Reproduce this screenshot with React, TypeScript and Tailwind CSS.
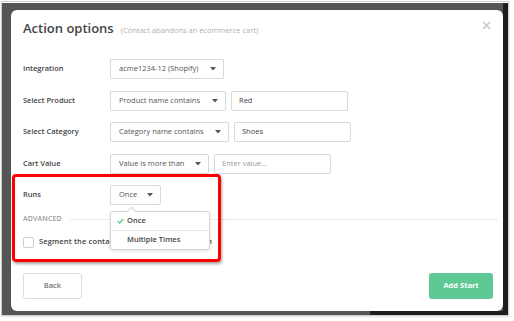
const Caret = () => (
  <svg width="6" height="4" viewBox="0 0 6 4" className="shrink-0">
    <path d="M0 0h6L3 3.5z" fill="#555" />
  </svg>
)

const Select = ({ label, width }: { label: string; width: string }) => (
  <div
    className={`${width} h-[20px] flex items-center justify-between pl-[8px] pr-[7px] border border-[#d9d9d9] rounded-[2px] bg-white text-[7.5px] text-[#555]`}
  >
    <span className="whitespace-nowrap">{label}</span>
    <Caret />
  </div>
)

const Input = ({ value, placeholder }: { value?: string; placeholder?: string }) => (
  <div className="w-[117px] h-[20px] flex items-center px-[7px] border border-[#d9d9d9] rounded-[2px] bg-white text-[7.5px]">
    {value ? (
      <span className="text-[#444]">{value}</span>
    ) : (
      <span className="text-[#9a9a9a]">{placeholder}</span>
    )}
  </div>
)

const Row = ({ label, children }: { label: string; children: React.ReactNode }) => (
  <div className="flex items-center h-[20px]">
    <div className="w-[87px] shrink-0 text-[7.5px] font-semibold text-[#444]">{label}</div>
    <div className="flex items-center gap-[5px]">{children}</div>
  </div>
)

export default function App() {
  return (
    <div className="w-[514px] h-[321px] bg-white pl-[1px] pt-[1px] font-['Open_Sans',sans-serif]">
      <div className="w-[508px] h-[315px] border border-[#cdcdcd] shadow-[0_1px_2px_rgba(0,0,0,0.12)] bg-white pt-[1px]">
        <div className="h-full flex flex-col bg-[#555] pl-[9px] pt-[7px] border-r-[5px] border-r-[#1e1e1e]">
          <div className="relative flex-1 bg-white rounded-[6px] pl-[12px] flex flex-col">
            {/* header */}
            <div className="flex items-start justify-between pt-[8px] pr-[12px]">
              <div className="flex items-baseline gap-[7px] h-[20px] leading-[20px]">
                <span className="text-[13px] font-semibold text-[#444]">Action options</span>
                <span className="text-[7.5px] text-[#b0b0b0]">(Contact abandons an ecommerce cart)</span>
              </div>
              <svg width="9" height="9" viewBox="0 0 9 9" className="mt-[3px]">
                <path d="M1 1l7 7M8 1L1 8" stroke="#c8c8c8" strokeWidth="1.6" />
              </svg>
            </div>

            {/* form rows */}
            <div className="mt-[21px] flex flex-col gap-[11.5px]">
              <Row label="Integration">
                <Select label="acme1234-12 (Shopify)" width="w-[114px]" />
              </Row>
              <Row label="Select Product">
                <Select label="Product name contains" width="w-[116px]" />
                <Input value="Red" />
              </Row>
              <Row label="Select Category">
                <Select label="Category name contains" width="w-[119px]" />
                <Input value="Shoes" />
              </Row>
              <Row label="Cart Value">
                <Select label="Value is more than" width="w-[99px]" />
                <Input placeholder="Enter value..." />
              </Row>
              <Row label="Runs">
                <div className="relative">
                  <Select label="Once" width="w-[51px]" />
                  {/* open dropdown */}
                  <div className="absolute left-0 top-[26px] z-10 w-[100px] bg-white border border-[#d6d6d6] rounded-[3px] shadow-[0_1px_3px_rgba(0,0,0,0.12)] text-[7.5px] font-semibold text-[#444]">
                    <div className="absolute -top-[4px] left-[17px] w-[7px] h-[7px] rotate-45 bg-white border-l border-t border-[#d6d6d6]" />
                    <div className="relative flex items-center h-[19px] pl-[6px] gap-[3px] border-b border-[#e6e6e6]">
                      <svg width="7" height="6" viewBox="0 0 7 6">
                        <path d="M0.7 3.1l1.9 1.8L6.3 0.9" stroke="#5cc990" strokeWidth="1.4" fill="none" />
                      </svg>
                      <span>Once</span>
                    </div>
                    <div className="flex items-center h-[18px] pl-[16px]">Multiple Times</div>
                  </div>
                </div>
              </Row>
            </div>

            {/* advanced */}
            <div className="mt-[9px] h-[10px] flex items-center gap-[8px] pr-[5px]">
              <span className="text-[7px] font-semibold tracking-[0.02em] text-[#9a9a9a]">ADVANCED</span>
              <div className="flex-1 h-px bg-[#ececec]" />
            </div>
            <div className="mt-[12px] h-[12px] flex items-center gap-[5px]">
              <div className="w-[11px] h-[11px] border border-[#cfcfcf] rounded-[2px] bg-white" />
              <span className="text-[7.5px] font-semibold tracking-[0.15px] text-[#444]">
                Segment the contacts that run into this action
              </span>
            </div>

            {/* footer */}
            <div className="mt-[25px] flex justify-between pr-[10px]">
              <div className="w-[59px] h-[26px] flex items-center justify-center border border-[#dcdcdc] rounded-[3px] text-[7.5px] font-semibold text-[#777]">
                Back
              </div>
              <div className="w-[64px] h-[26px] flex items-center justify-center rounded-[3px] bg-[#5ec994] text-[7.5px] font-bold text-white">
                Add Start
              </div>
            </div>

            {/* screenshot annotation */}
            <div className="absolute left-[1px] top-[164px] w-[209px] h-[88px] border-[3.5px] border-[#f00] rounded-[4px] shadow-[1px_2px_3px_rgba(0,0,0,0.35)] pointer-events-none" />
          </div>
          <div className="h-[4px] bg-[linear-gradient(to_right,#555_0,#555_73%,#1e1e1e_73%)]" />
        </div>
      </div>
    </div>
  )
}
